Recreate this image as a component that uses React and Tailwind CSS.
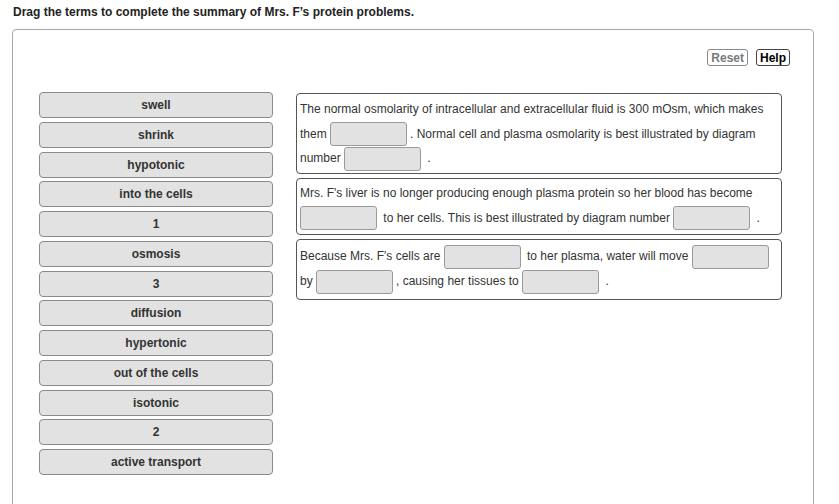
import React from "react";

const terms = [
  "swell",
  "shrink",
  "hypotonic",
  "into the cells",
  "1",
  "osmosis",
  "3",
  "diffusion",
  "hypertonic",
  "out of the cells",
  "isotonic",
  "2",
  "active transport",
];

function Drop() {
  return (
    <span className="inline-block align-middle w-[77px] h-[24px] ml-0 mr-[3px] bg-[#e2e2e2] border border-[#9a9a9a] rounded-[3px]" />
  );
}

export default function App() {
  return (
    <div
      className="w-[839px] h-[504px] overflow-hidden bg-white pl-[12px] text-[#333]"
      style={{ fontFamily: '"Liberation Sans", Arial, sans-serif' }}
    >
      <div className="pt-[5px] pl-[1px] leading-[15px] text-[12px] font-bold text-[#222]">
        Drag the terms to complete the summary of Mrs. F’s protein problems.
      </div>
      <div className="mt-[9px] w-[802px] h-[520px] border border-[#aaaaaa] rounded-tl-[4px] rounded-tr-[4px] pt-[19px] pl-[26px] pr-[23px]">
        <div className="flex justify-end gap-[8px]">
          <button className="h-[17px] px-[3px] leading-[14px] text-[12px] font-bold text-[#7a7a7a] border border-[#8a8a8a] rounded-[3px] bg-white">
            Reset
          </button>
          <button className="h-[17px] px-[3px] leading-[14px] text-[12px] font-bold text-black border border-[#444] rounded-[3px] bg-white">
            Help
          </button>
        </div>
        <div className="flex mt-[26px] gap-[23px]">
          <div className="flex flex-col gap-[3.75px] w-[234px]">
            {terms.map((t) => (
              <div
                key={t}
                className="h-[26px] flex items-center justify-center bg-[#e2e2e2] border border-[#8a8a8a] rounded-[4px] text-[12px] font-bold text-[#333]"
              >
                {t}
              </div>
            ))}
          </div>
          <div className="flex flex-col gap-[4px] w-[486px] mt-[1px] text-[12px] text-[#333]">
            <div className="border border-[#555] rounded-[4px] px-[3px] pt-[3px] pb-[2px] leading-[24.5px]">
              The normal osmolarity of intracellular and extracellular fluid is 300 mOsm, which makes
              <br />
              them <Drop />. Normal cell and plasma osmolarity is best illustrated by diagram
              <br />
              number <Drop /> .
            </div>
            <div className="border border-[#555] rounded-[4px] px-[3px] pt-[2px] pb-[4px] leading-[24.5px]">
              Mrs. F's liver is no longer producing enough plasma protein so her blood has become
              <br />
              <Drop /> to her cells. This is best illustrated by diagram number <Drop /> .
            </div>
            <div className="border border-[#555] rounded-[4px] px-[3px] pt-[4px] pb-[5px] leading-[24.5px]">
              Because Mrs. F's cells are <Drop /> to her plasma, water will move <Drop />
              <br />
              by <Drop />, causing her tissues to <Drop /> .
            </div>
          </div>
        </div>
      </div>
    </div>
  );
}
